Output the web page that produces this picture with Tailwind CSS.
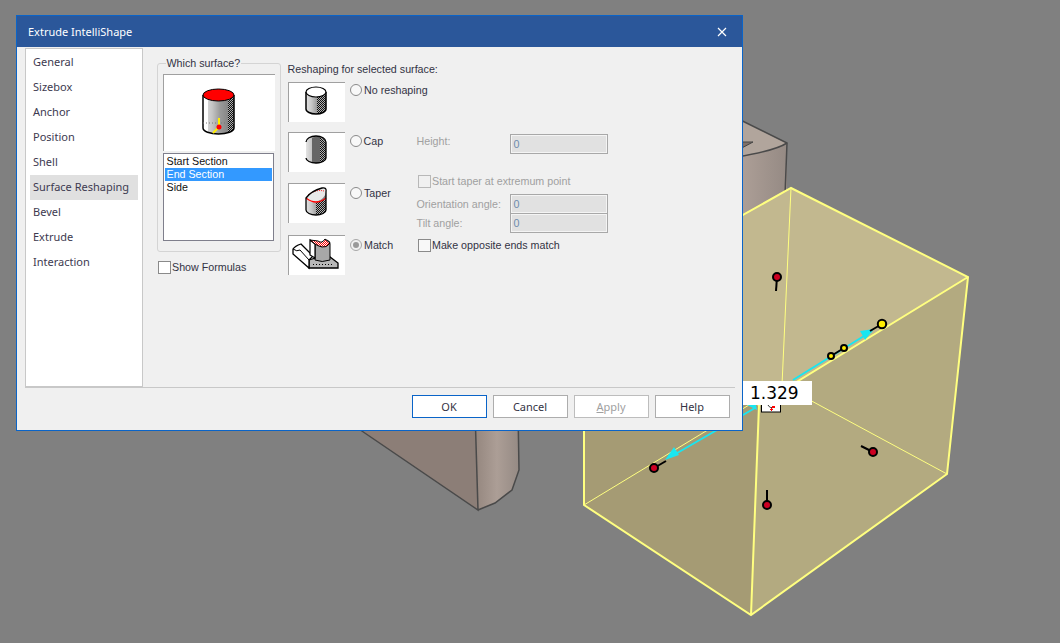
<!DOCTYPE html>
<html>
<head>
<meta charset="utf-8">
<script src="https://cdn.jsdelivr.net/npm/@tailwindcss/browser@4"></script>
</head>
<body class="m-0">
<div class="relative w-[1060px] h-[643px] overflow-hidden bg-[#808080] font-['Liberation_Sans',sans-serif] text-[10.7px] leading-[14px] text-[#333344]">

  <!-- shared svg definitions -->
  <svg class="absolute w-0 h-0">
    <defs>
      <pattern id="dith" width="2" height="2" patternUnits="userSpaceOnUse">
        <rect width="2" height="2" fill="#b0b0b0"/><rect width="1" height="1" fill="#111"/><rect x="1" y="1" width="1" height="1" fill="#111"/>
      </pattern>
      <linearGradient id="cyl" x1="0" x2="1" y1="0" y2="0">
        <stop offset="0" stop-color="#e4e4e4"/><stop offset=".3" stop-color="#c4c4c4"/><stop offset=".55" stop-color="#9a9a9a"/><stop offset="1" stop-color="#777"/>
      </linearGradient>
      <pattern id="dithred" width="2" height="2" patternUnits="userSpaceOnUse">
        <rect width="2" height="2" fill="#fff"/><rect width="1" height="1" fill="#f00"/><rect x="1" y="1" width="1" height="1" fill="#f00"/>
      </pattern>
      <linearGradient id="brown" x1="0" x2="1" y1="0" y2="0">
        <stop offset="0" stop-color="#94867e"/><stop offset=".5" stop-color="#ac9e96"/><stop offset="1" stop-color="#958a84"/>
      </linearGradient>
    </defs>
  </svg>

  <!-- 3D canvas -->
  <svg class="absolute left-0 top-0" width="1060" height="643" viewBox="0 0 1060 643">
    <!-- brown shape, upper -->
    <path d="M700 100 L787 143 V192 L700 240Z" fill="url(#brown)"/>
    <path d="M700 100 L787 143 Q770 154 700 162Z" fill="#b1a59c"/>
    <path d="M735 142 L753 142 L738 150Z" fill="#7f7068" stroke="#444" stroke-width="1"/>
    <path d="M700 100 L787 143 L785 195" fill="none" stroke="#4a4a4a" stroke-width="1.5"/>
    <path d="M787 143 Q770 154 700 162" fill="none" stroke="#4a4a4a" stroke-width="1.5"/>
    <!-- brown shape, lower -->
    <path d="M331 410 H475 L478 510Z" fill="#8c7e77"/>
    <path d="M475 410 H518 L519 470 L512 490 L495 503 L478 510Z" fill="url(#brown)"/>
    <path d="M331 410 L478 510 L475 410 M478 510 L495 503 L512 490 L519 470 L518 410" fill="none" stroke="#4a4a4a" stroke-width="1.5"/>

    <!-- box faces -->
    <path d="M791 188 L968 277 L759 405 L584 304Z" fill="#c2b88f"/>
    <path d="M968 277 L947 474 L751 615 L759 405Z" fill="#b3aa80"/>
    <path d="M584 304 L759 405 L751 615 L584 505Z" fill="#a59b74"/>
    <!-- hidden edges -->
    <path d="M791 188 L782 385 L947 474 M782 385 L584 505" fill="none" stroke="#ffff80" stroke-width="1"/>
    <!-- front edges -->
    <path d="M791 188 L968 277 L947 474 L751 615 L584 505 L584 304Z M968 277 L759 405 L584 304 M759 405 L751 615" fill="none" stroke="#ffff80" stroke-width="2"/>

    <!-- cyan axis -->
    <path d="M793 380 L872 331 M755 408 L672 456" fill="none" stroke="#19e6f0" stroke-width="2"/>
    <path d="M874 329 L860 331 L865 340Z" fill="#19e6f0"/>
    <path d="M665 460 L679 455 L674 447Z" fill="#19e6f0"/>
    <path d="M745 404 L757 410 L756 405 L748 400Z" fill="#19e6f0"/>

    <!-- handles -->
    <g stroke="#000" stroke-width="2" fill="none">
      <path d="M777 277 L776 291"/>
      <path d="M882 324 L870 331"/>
      <path d="M831 356 L844 348"/>
      <path d="M654 468 L666 461"/>
      <path d="M873 452 L861 446"/>
      <path d="M767 505 L767 490"/>
    </g>
    <g stroke="#000" stroke-width="2" fill="#cc0022">
      <circle cx="777" cy="277" r="4"/>
      <circle cx="654" cy="468" r="4"/>
      <circle cx="873" cy="452" r="4"/>
      <circle cx="767" cy="505" r="4"/>
    </g>
    <g stroke="#000" stroke-width="2" fill="#ffee00">
      <circle cx="882" cy="324" r="4.2"/>
      <circle cx="831" cy="356" r="3"/>
      <circle cx="844" cy="348" r="3"/>
    </g>

    <!-- small tag under the measurement -->
    <rect x="761.5" y="400" width="19" height="12" fill="#fff" stroke="#000" stroke-width="1"/>
    <path d="M768 405 Q770 409 775 407" fill="none" stroke="#333" stroke-width="1"/>
    <path d="M772 406h3v2h-3z" fill="#f00"/>
    <path d="M771.5 408v3M770 409.5h3" stroke="#f00" stroke-width="1"/>
  </svg>

  <!-- measurement -->
  <div class="absolute left-[740px] top-[381px] w-[72px] h-[24px] bg-white pl-[10px] font-['DejaVu_Sans',sans-serif] text-[17px] leading-[24px] text-black">1.329</div>

  <!-- dialog -->
  <div class="absolute left-[16px] top-[15px] w-[727px] h-[416px] border-[1.5px] border-[#0a64c8] bg-[#f0f0f0] flex flex-col">
    <div class="h-[31px] shrink-0 bg-[#2b579a] flex items-center justify-between pl-[11px] pr-[15px] font-['Noto_Sans',sans-serif] text-[11px] text-white">
      <span>Extrude IntelliShape</span>
      <svg width="10" height="10" viewBox="0 0 10 10"><path d="M1 1L9 9M9 1L1 9" stroke="#fff" stroke-width="1.2"/></svg>
    </div>

    <div class="flex h-[340px] shrink-0">
      <!-- nav -->
      <div class="ml-[7.5px] mt-[1px] w-[118px] h-[339px] bg-white border border-[#c8c8c8] pt-[1px] px-[4px] font-['Noto_Sans',sans-serif] text-[11px] text-[#3d3a50]">
        <div class="h-[25px] leading-[24px] pl-[3.5px]">General</div>
        <div class="h-[25px] leading-[24px] pl-[3.5px]">Sizebox</div>
        <div class="h-[25px] leading-[24px] pl-[3.5px]">Anchor</div>
        <div class="h-[25px] leading-[24px] pl-[3.5px]">Position</div>
        <div class="h-[25px] leading-[24px] pl-[3.5px]">Shell</div>
        <div class="h-[25px] leading-[24px] pl-[3.5px] bg-[#e0e0e0]">Surface Reshaping</div>
        <div class="h-[25px] leading-[24px] pl-[3.5px]">Bevel</div>
        <div class="h-[25px] leading-[24px] pl-[3.5px]">Extrude</div>
        <div class="h-[25px] leading-[24px] pl-[3.5px]">Interaction</div>
      </div>

      <!-- left group -->
      <div class="ml-[14px] mt-[9px] w-[124px] shrink-0">
        <fieldset class="h-[196px] border border-[#d4d4d4] rounded-[3px] px-[5px] pb-0">
          <legend class="ml-[3px] px-[1px]">Which surface?</legend>
          <div class="w-[112px] h-[77px] mt-[4px] bg-white border-l border-t border-[#a0a0a0]">
            <svg width="111" height="76" viewBox="0 0 111 76">
              <path d="M39 20 V53 A15.5 6 0 0 0 70 53 V20Z" fill="url(#cyl)"/>
              <path d="M39 20 V56 L44 58 V20Z" fill="#fff"/>
              <path d="M64 20 V58 Q68 57 70 53 V20Z" fill="url(#dith)"/>
              <path d="M39 20 V53 A15.5 6 0 0 0 70 53 V20" fill="none" stroke="#000" stroke-width="1.5"/>
              <ellipse cx="54.5" cy="20" rx="15.5" ry="6" fill="#f00" stroke="#000" stroke-width="1"/>
              <path d="M39 48H70" stroke="#777" stroke-width="1" stroke-dasharray="1 2"/>
              <path d="M54 43h2v10h-2z" fill="#ffee00"/>
              <path d="M54 53 L49 58" stroke="#ffee00" stroke-width="2"/>
              <circle cx="55" cy="52" r="2.5" fill="#f00"/>
            </svg>
          </div>
          <div class="w-[111px] h-[88px] mt-[2px] bg-white border border-[#7f7f8c] pt-[1px] px-[1px] text-[#111]">
            <div class="h-[13px] leading-[13px] pl-[2px]">Start Section</div>
            <div class="h-[13px] leading-[13px] pl-[2px] bg-[#3399ff] text-white">End Section</div>
            <div class="h-[13px] leading-[13px] pl-[2px]">Side</div>
          </div>
        </fieldset>
        <div class="flex items-center mt-[8px] ml-[1px]">
          <span class="w-[13px] h-[13px] border border-[#8a8a8a] bg-white shrink-0"></span>
          <span class="ml-[1.5px]">Show Formulas</span>
        </div>
      </div>

      <!-- right column -->
      <div class="ml-[7px] mt-[15px] flex-1">
        <div class="h-[14px]">Reshaping for selected surface:</div>

        <div class="flex h-[50px] mt-[6px]">
          <div class="w-[57px] h-[40px] shrink-0 bg-white border-l border-t border-[#a0a0a0]">
            <svg width="56" height="39" viewBox="0 0 56 39">
              <path d="M17 9 V26 A10 5 0 0 0 37 26 V9Z" fill="url(#cyl)"/>
              <path d="M28 9 V31 Q34 31 37 26 V9Z" fill="url(#dith)"/>
              <path d="M17 9 V26 A10 5 0 0 0 37 26 V9" fill="none" stroke="#000" stroke-width="1.5"/>
              <ellipse cx="27" cy="9" rx="10" ry="5" fill="#fff" stroke="#000" stroke-width="1.2"/>
            </svg>
          </div>
          <span class="ml-[5px] mt-[2px] w-[12px] h-[12px] rounded-full border border-[#8a8a8a] bg-[#f8f8f8] shrink-0"></span>
          <span class="ml-[2.5px] mt-[1px]">No reshaping</span>
        </div>

        <div class="flex h-[51px]">
          <div class="w-[57px] h-[40px] shrink-0 bg-white border-l border-t border-[#a0a0a0]">
            <svg width="56" height="39" viewBox="0 0 56 39">
              <path d="M17 9 V25 A10 5 0 0 0 37 25 V9 A10 6 0 0 0 17 9Z" fill="url(#cyl)"/>
              <path d="M23 5 V29 Q27 31 31 30 V4 Q27 3 23 5Z" fill="#666"/>
              <path d="M31 6 V30 Q35 29 37 25 V9 Q35 6 31 4Z" fill="url(#dith)"/>
              <path d="M17 9 A10 6 0 0 1 37 9 V25 A10 5 0 0 1 17 25" fill="none" stroke="#000" stroke-width="1.3"/>
            </svg>
          </div>
          <span class="ml-[5px] mt-[3px] w-[12px] h-[12px] rounded-full border border-[#8a8a8a] bg-[#f8f8f8] shrink-0"></span>
          <span class="ml-[2px] mt-[2px] w-[53px] shrink-0">Cap</span>
          <span class="mt-[2px] w-[93px] shrink-0 text-[#a0a0a0]">Height:</span>
          <span class="mt-[2px] w-[98px] h-[20px] border border-[#a8a8a8] bg-[#e1e1e1] shadow-[inset_0_0_0_1px_#f4f4f4] pl-[3px] leading-[19px] text-[#6f8cad]">0</span>
        </div>

        <div class="flex h-[52px]">
          <div class="w-[57px] h-[40px] shrink-0 bg-white border-l border-t border-[#a0a0a0]">
            <svg width="56" height="39" viewBox="0 0 56 39">
              <path d="M17 14 V26 A10 5 0 0 0 37 26 V5Z" fill="url(#cyl)"/>
              <path d="M27 18 V31 Q34 31 37 26 V15Z" fill="url(#dith)"/>
              <path d="M17 14 Q22 7 33 4 Q38 3 37 8 Q36 15 27 18 Q19 19 17 14Z" fill="#e8e8e8"/>
              <path d="M17 14 Q27 22 37 14" fill="none" stroke="#f00" stroke-width="1.3"/>
              <path d="M19 11 Q27 5 35 7" fill="none" stroke="#f00" stroke-width="1" stroke-dasharray="1 1"/>
              <path d="M17 14 Q22 7 33 4 Q38 3 37 8 V26 A10 5 0 0 1 17 26Z" fill="none" stroke="#000" stroke-width="1.3"/>
            </svg>
          </div>
          <span class="ml-[5px] mt-[4px] w-[12px] h-[12px] rounded-full border border-[#8a8a8a] bg-[#f8f8f8] shrink-0"></span>
          <span class="ml-[2.5px] mt-[3px] w-[52.5px] shrink-0">Taper</span>
          <div class="-mt-[9px] w-[191px] shrink-0 text-[#a0a0a0]">
            <div class="flex items-center h-[14px] ml-[1px]">
              <span class="w-[13px] h-[13px] border border-[#b8b8b8] bg-[#f0f0f0] shrink-0"></span>
              <span class="ml-[1.5px]">Start taper at extremum point</span>
            </div>
            <div class="flex mt-[6px]">
              <span class="w-[93px] shrink-0 leading-[20px]">Orientation angle:</span>
              <span class="w-[98px] h-[20px] border border-[#a8a8a8] bg-[#e1e1e1] shadow-[inset_0_0_0_1px_#f4f4f4] pl-[3px] leading-[19px] text-[#6f8cad]">0</span>
            </div>
            <div class="flex -mt-[1px]">
              <span class="w-[93px] shrink-0 leading-[20px]">Tilt angle:</span>
              <span class="w-[98px] h-[20px] border border-[#a8a8a8] bg-[#e1e1e1] shadow-[inset_0_0_0_1px_#f4f4f4] pl-[3px] leading-[19px] text-[#6f8cad]">0</span>
            </div>
          </div>
        </div>

        <div class="flex h-[40px]">
          <div class="w-[57px] h-[40px] shrink-0 bg-white border-l border-t border-[#a0a0a0]">
            <svg width="56" height="39" viewBox="0 0 56 39">
              <path d="M20 24 L30 21 L41 21 L49 27 V32 H20Z" fill="#b8b8b8" stroke="#000" stroke-width="1.3"/>
              <path d="M4 13 Q6 10 12 8 L24 20 L20 24 V32 L4 18Z" fill="#fff" stroke="#000" stroke-width="1.3"/>
              <path d="M4 13 Q8 16 11 14 L20 24" fill="none" stroke="#000" stroke-width="1"/>
              <path d="M26 8 V24 Q33 27 41 24 V8 Q41 4 36 4 Q33 10 26 8Z" fill="#a8a8a8" stroke="#000" stroke-width="1"/>
              <path d="M21 4 L26 8 V22 L21 19Z" fill="#fff" stroke="#000" stroke-width="1.2"/>
              <path d="M21 4 L29 5 Q33 8 36 3 L41 7 Q38 12 33 11 Q29 10 26 8Z" fill="url(#dithred)" stroke="#000" stroke-width="1"/>
              <path d="M24 28.5 H44" stroke="#000" stroke-width="1" stroke-dasharray="1 2"/>
            </svg>
          </div>
          <span class="ml-[5px] mt-[4px] w-[12px] h-[12px] rounded-full border border-[#a8a8a8] bg-[#f0f0f0] shrink-0 flex items-center justify-center"><span class="w-[6px] h-[6px] rounded-full bg-[#999]"></span></span>
          <span class="ml-[2.5px] mt-[3px] w-[52.5px] shrink-0">Match</span>
          <div class="flex items-center h-[14px] mt-[3px] ml-[1px]">
            <span class="w-[13px] h-[13px] border border-[#8a8a8a] bg-[#f8f8f8] shrink-0"></span>
            <span class="ml-[1.5px]">Make opposite ends match</span>
          </div>
        </div>
      </div>
    </div>

    <div class="h-px shrink-0 ml-[7.5px] mr-[7px] bg-[#c8c8c8]"></div>
    <div class="flex justify-end gap-[6px] pr-[12.5px] pt-[7px] font-['Noto_Sans',sans-serif] text-[11px] text-[#333344]">
      <span class="w-[75px] h-[23px] border border-[#0a64c8] bg-white flex items-center justify-center">OK</span>
      <span class="w-[75px] h-[23px] border border-[#adadad] bg-white flex items-center justify-center">Cancel</span>
      <span class="w-[75px] h-[23px] border border-[#bdbdbd] bg-white flex items-center justify-center text-[#a0a0a0]"><span><u>A</u>pply</span></span>
      <span class="w-[75px] h-[23px] border border-[#adadad] bg-white flex items-center justify-center">Help</span>
    </div>
  </div>
</div>
</body>
</html>
